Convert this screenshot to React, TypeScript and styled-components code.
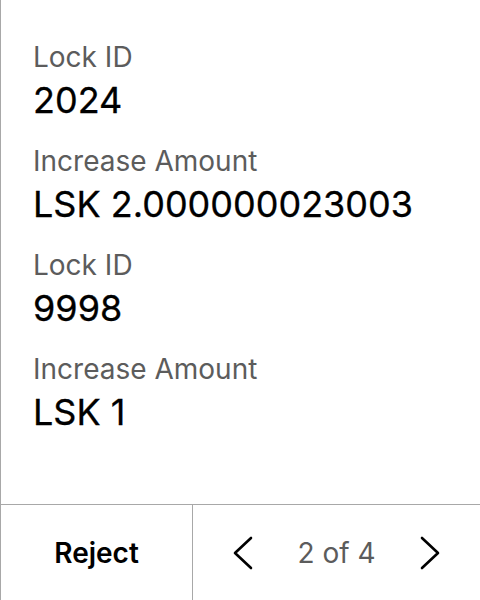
import React from "react";
import styled, { createGlobalStyle } from "styled-components";

const GlobalStyle = createGlobalStyle`
  html, body { margin: 0; padding: 0; background: #fff; }
  body { font-family: Inter, "Noto Sans", sans-serif; }
`;

const Screen = styled.div`
  width: 480px;
  height: 600px;
  box-sizing: border-box;
  border-left: 1px solid #a8a8a8;
  display: flex;
  flex-direction: column;
`;

const Details = styled.div`
  flex: 1;
  padding: 41px 32px 0;
  display: flex;
  flex-direction: column;
`;

const Field = styled.div`
  display: flex;
  flex-direction: column;
  margin-bottom: 18px;
`;

const Label = styled.span`
  font-size: 28px;
  line-height: 32px;
  color: #5c5c5c;
`;

const Value = styled.span`
  font-size: 36px;
  line-height: 54px;
  color: #000;
  font-weight: 400;
  -webkit-text-stroke: 0.3px #000;
`;

const Footer = styled.div`
  height: 95px;
  border-top: 1px solid #a8a8a8;
  display: flex;
`;

const RejectButton = styled.button`
  width: 192px;
  border: none;
  border-right: 1px solid #a8a8a8;
  background: none;
  font-family: inherit;
  font-size: 28px;
  font-weight: 600;
  color: #000;
`;

const Pager = styled.div`
  flex: 1;
  display: flex;
  align-items: center;
  justify-content: space-between;
  padding: 0 38px;
`;

const Arrow = styled.button`
  border: none;
  background: none;
  padding: 0;
  width: 24px;
  height: 36px;
  display: flex;
  align-items: center;
  justify-content: center;
`;

const Count = styled.span`
  font-size: 28px;
  color: #5c5c5c;
`;

const Chevron = ({ dir }: { dir: "left" | "right" }) => (
  <svg width="22" height="34" viewBox="0 0 22 34" fill="none">
    <path
      d={dir === "left" ? "M19 2 L3 17 L19 32" : "M3 2 L19 17 L3 32"}
      stroke="#000"
      strokeWidth="2.6"
      strokeLinecap="round"
      strokeLinejoin="round"
    />
  </svg>
);

const fields = [
  { label: "Lock ID", value: "2024" },
  { label: "Increase Amount", value: "LSK 2.000000023003" },
  { label: "Lock ID", value: "9998" },
  { label: "Increase Amount", value: "LSK 1" },
];

const App = () => (
  <>
    <GlobalStyle />
    <Screen>
      <Details>
        {fields.map((f, i) => (
          <Field key={i}>
            <Label>{f.label}</Label>
            <Value>{f.value}</Value>
          </Field>
        ))}
      </Details>
      <Footer>
        <RejectButton>Reject</RejectButton>
        <Pager>
          <Arrow>
            <Chevron dir="left" />
          </Arrow>
          <Count>2 of 4</Count>
          <Arrow>
            <Chevron dir="right" />
          </Arrow>
        </Pager>
      </Footer>
    </Screen>
  </>
);

export default App;
